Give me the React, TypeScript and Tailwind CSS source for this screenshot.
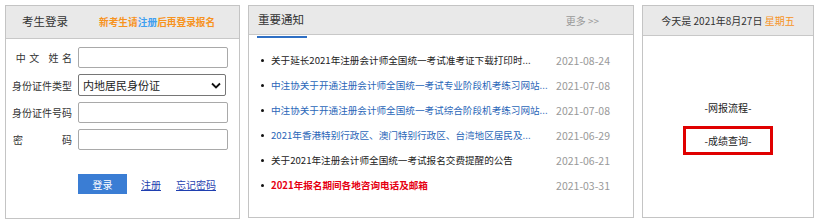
const news = [
  { title: "关于延长2021年注册会计师全国统一考试准考证下载打印时...", date: "2021-08-24", tone: "text-[#222]" },
  { title: "中注协关于开通注册会计师全国统一考试专业阶段机考练习网站...", date: "2021-07-08", tone: "text-[#2a66b8]" },
  { title: "中注协关于开通注册会计师全国统一考试综合阶段机考练习网站...", date: "2021-07-08", tone: "text-[#2a66b8]" },
  { title: "2021年香港特别行政区、澳门特别行政区、台湾地区居民及...", date: "2021-06-29", tone: "text-[#2a66b8]" },
  { title: "关于2021年注册会计师全国统一考试报名交费提醒的公告", date: "2021-06-21", tone: "text-[#222]" },
  { title: "2021年报名期间各地咨询电话及邮箱", date: "2021-03-31", tone: "text-[#e60012] font-bold" },
];

function Field({ label }: { label: React.ReactNode }) {
  return (
    <div className="flex items-center">
      <div className="w-[66px] flex justify-end text-[10px] text-[#333]">{label}</div>
      <input className="ml-[6px] w-[150px] h-[21px] border border-[#a9a9a9] rounded-[2px] bg-white outline-none" />
    </div>
  );
}

export default function App() {
  return (
    <div className="min-h-screen bg-white font-['Microsoft_YaHei','Noto_Sans_CJK_SC',sans-serif]">
      <div className="flex gap-2 pt-[5px] pl-[5px]">

        {/* login */}
        <div className="w-[235px] h-[214px] border border-[#c4c4c4] flex flex-col">
          <div className="h-[33px] bg-[#e9e9e9] border-b border-[#c8c8c8] flex items-center pl-[16px]">
            <span className="text-[11.5px] text-[#333]">考生登录</span>
            <span className="ml-[31px] text-[9.7px] font-bold text-[#f7931e]">
              新考生请<span className="text-[#3fa0f0]">注册</span>后再登录报名
            </span>
          </div>

          <div className="flex flex-col gap-[6px] pt-[8px]">
            <Field label={<span className="tracking-[3.5px] mr-[-3.5px]">中文&nbsp;姓名</span>} />
            <div className="flex items-center">
              <div className="w-[66px] flex justify-end text-[10px] text-[#333]">身份证件类型</div>
              <div className="ml-[6px] w-[148px] h-[22px] border border-[#767676] rounded-[2px] flex items-center justify-between px-[4px]">
                <span className="text-[11px] text-[#222]">内地居民身份证</span>
                <svg width="10" height="7" viewBox="0 0 10 7">
                  <path d="M1 1.5 L5 5.5 L9 1.5" fill="none" stroke="#111" strokeWidth="1.8" />
                </svg>
              </div>
            </div>
            <Field label="身份证件号码" />
            <Field label={<span className="w-[59px] flex justify-between"><span>密</span><span>码</span></span>} />
          </div>

          <div className="flex items-center mt-[24px] pl-[72px] text-[10px]">
            <button className="w-[49px] h-[20px] bg-[#3a7dd4] text-white">登录</button>
            <a href="#" className="ml-[14px] text-[#1f3fb0] underline">注册</a>
            <a href="#" className="ml-[15px] text-[#1f3fb0] underline">忘记密码</a>
          </div>
        </div>

        {/* notices */}
        <div className="w-[386px] h-[213px] border border-[#c4c4c4] flex flex-col">
          <div className="h-[29px] bg-[#e9e9e9] border-b border-[#c8c8c8] flex items-center justify-between pl-[9px] pr-[34px]">
            <span className="text-[11.5px] text-[#333]">重要通知</span>
            <span className="text-[10px] text-[#999]">更多 &gt;&gt;</span>
          </div>
          <div className="ml-[8px] mt-[1px] w-[50px] h-[2px] bg-[#2e6fc4]" />
          <ul className="pt-[10px] pl-[12px] pr-[23px]">
            {news.map((n, i) => (
              <li key={i} className="h-[25px] flex items-center">
                <span className="w-[3px] h-[3px] rounded-full bg-[#111] shrink-0" />
                <span className={`ml-[7px] flex-1 min-w-0 overflow-hidden whitespace-nowrap text-[9.6px] ${n.tone}`}>{n.title}</span>
                <span className="shrink-0 whitespace-nowrap text-[#999] text-[10.5px]">{n.date}</span>
              </li>
            ))}
          </ul>
        </div>

        {/* date */}
        <div className="w-[172px] h-[213px] border border-[#c4c4c4] flex flex-col">
          <div className="h-[30px] bg-[#e9e9e9] border-b border-[#c8c8c8] flex items-center justify-center text-[10px] text-[#333]">
            今天是 2021年8月27日&nbsp;<span className="text-[#f7931e]">星期五</span>
          </div>
          <div className="flex flex-col items-center pt-[65px] text-[10px] text-[#222]">
            <span className="leading-[14px]">-网报流程-</span>
            <div className="mt-[11px] w-[90px] h-[29px] border-[3px] border-[#e00000] flex items-center justify-center">
              -成绩查询-
            </div>
          </div>
        </div>

      </div>
    </div>
  );
}
